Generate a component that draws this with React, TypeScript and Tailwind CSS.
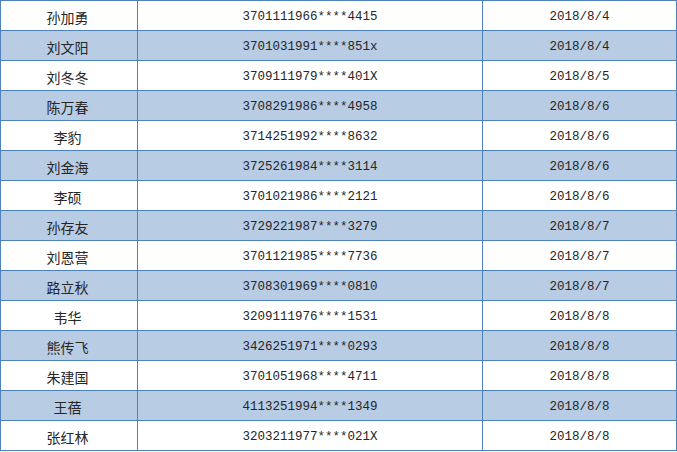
const rows: [string, string, string][] = [
  ["孙加勇", "3701111966****4415", "2018/8/4"],
  ["刘文阳", "3701031991****851x", "2018/8/4"],
  ["刘冬冬", "3709111979****401X", "2018/8/5"],
  ["陈万春", "3708291986****4958", "2018/8/6"],
  ["李豹", "3714251992****8632", "2018/8/6"],
  ["刘金海", "3725261984****3114", "2018/8/6"],
  ["李硕", "3701021986****2121", "2018/8/6"],
  ["孙存友", "3729221987****3279", "2018/8/7"],
  ["刘恩营", "3701121985****7736", "2018/8/7"],
  ["路立秋", "3708301969****0810", "2018/8/7"],
  ["韦华", "3209111976****1531", "2018/8/8"],
  ["熊传飞", "3426251971****0293", "2018/8/8"],
  ["朱建国", "3701051968****4711", "2018/8/8"],
  ["王蓓", "4113251994****1349", "2018/8/8"],
  ["张红林", "3203211977****021X", "2018/8/8"],
];

const mono = "font-['Liberation_Mono','Noto_Sans_CJK_SC',monospace] text-[12.5px]";

export default function App() {
  return (
    <div className="w-[677px] h-[452px] bg-white">
      <div className="w-[677px] border-l border-t border-[#4f81bd] text-[#262626]">
        {rows.map(([name, id, date], i) => (
          <div
            key={i}
            className={`grid grid-cols-[137px_345px_194px] h-[30px] ${i % 2 === 1 ? "bg-[#b8cce4]" : "bg-white"}`}
          >
            <div className="border-r border-b border-[#4f81bd] flex items-center justify-center pt-[3px] pr-[3px] font-['Noto_Sans_CJK_SC',sans-serif] text-[14px] leading-none">
              {name}
            </div>
            <div className={`border-r border-b border-[#4f81bd] flex items-center justify-center pt-[3px] leading-none ${mono}`}>
              {id}
            </div>
            <div className={`border-r border-b border-[#4f81bd] flex items-center justify-center pt-[3px] leading-none ${mono}`}>
              {date}
            </div>
          </div>
        ))}
      </div>
    </div>
  );
}
